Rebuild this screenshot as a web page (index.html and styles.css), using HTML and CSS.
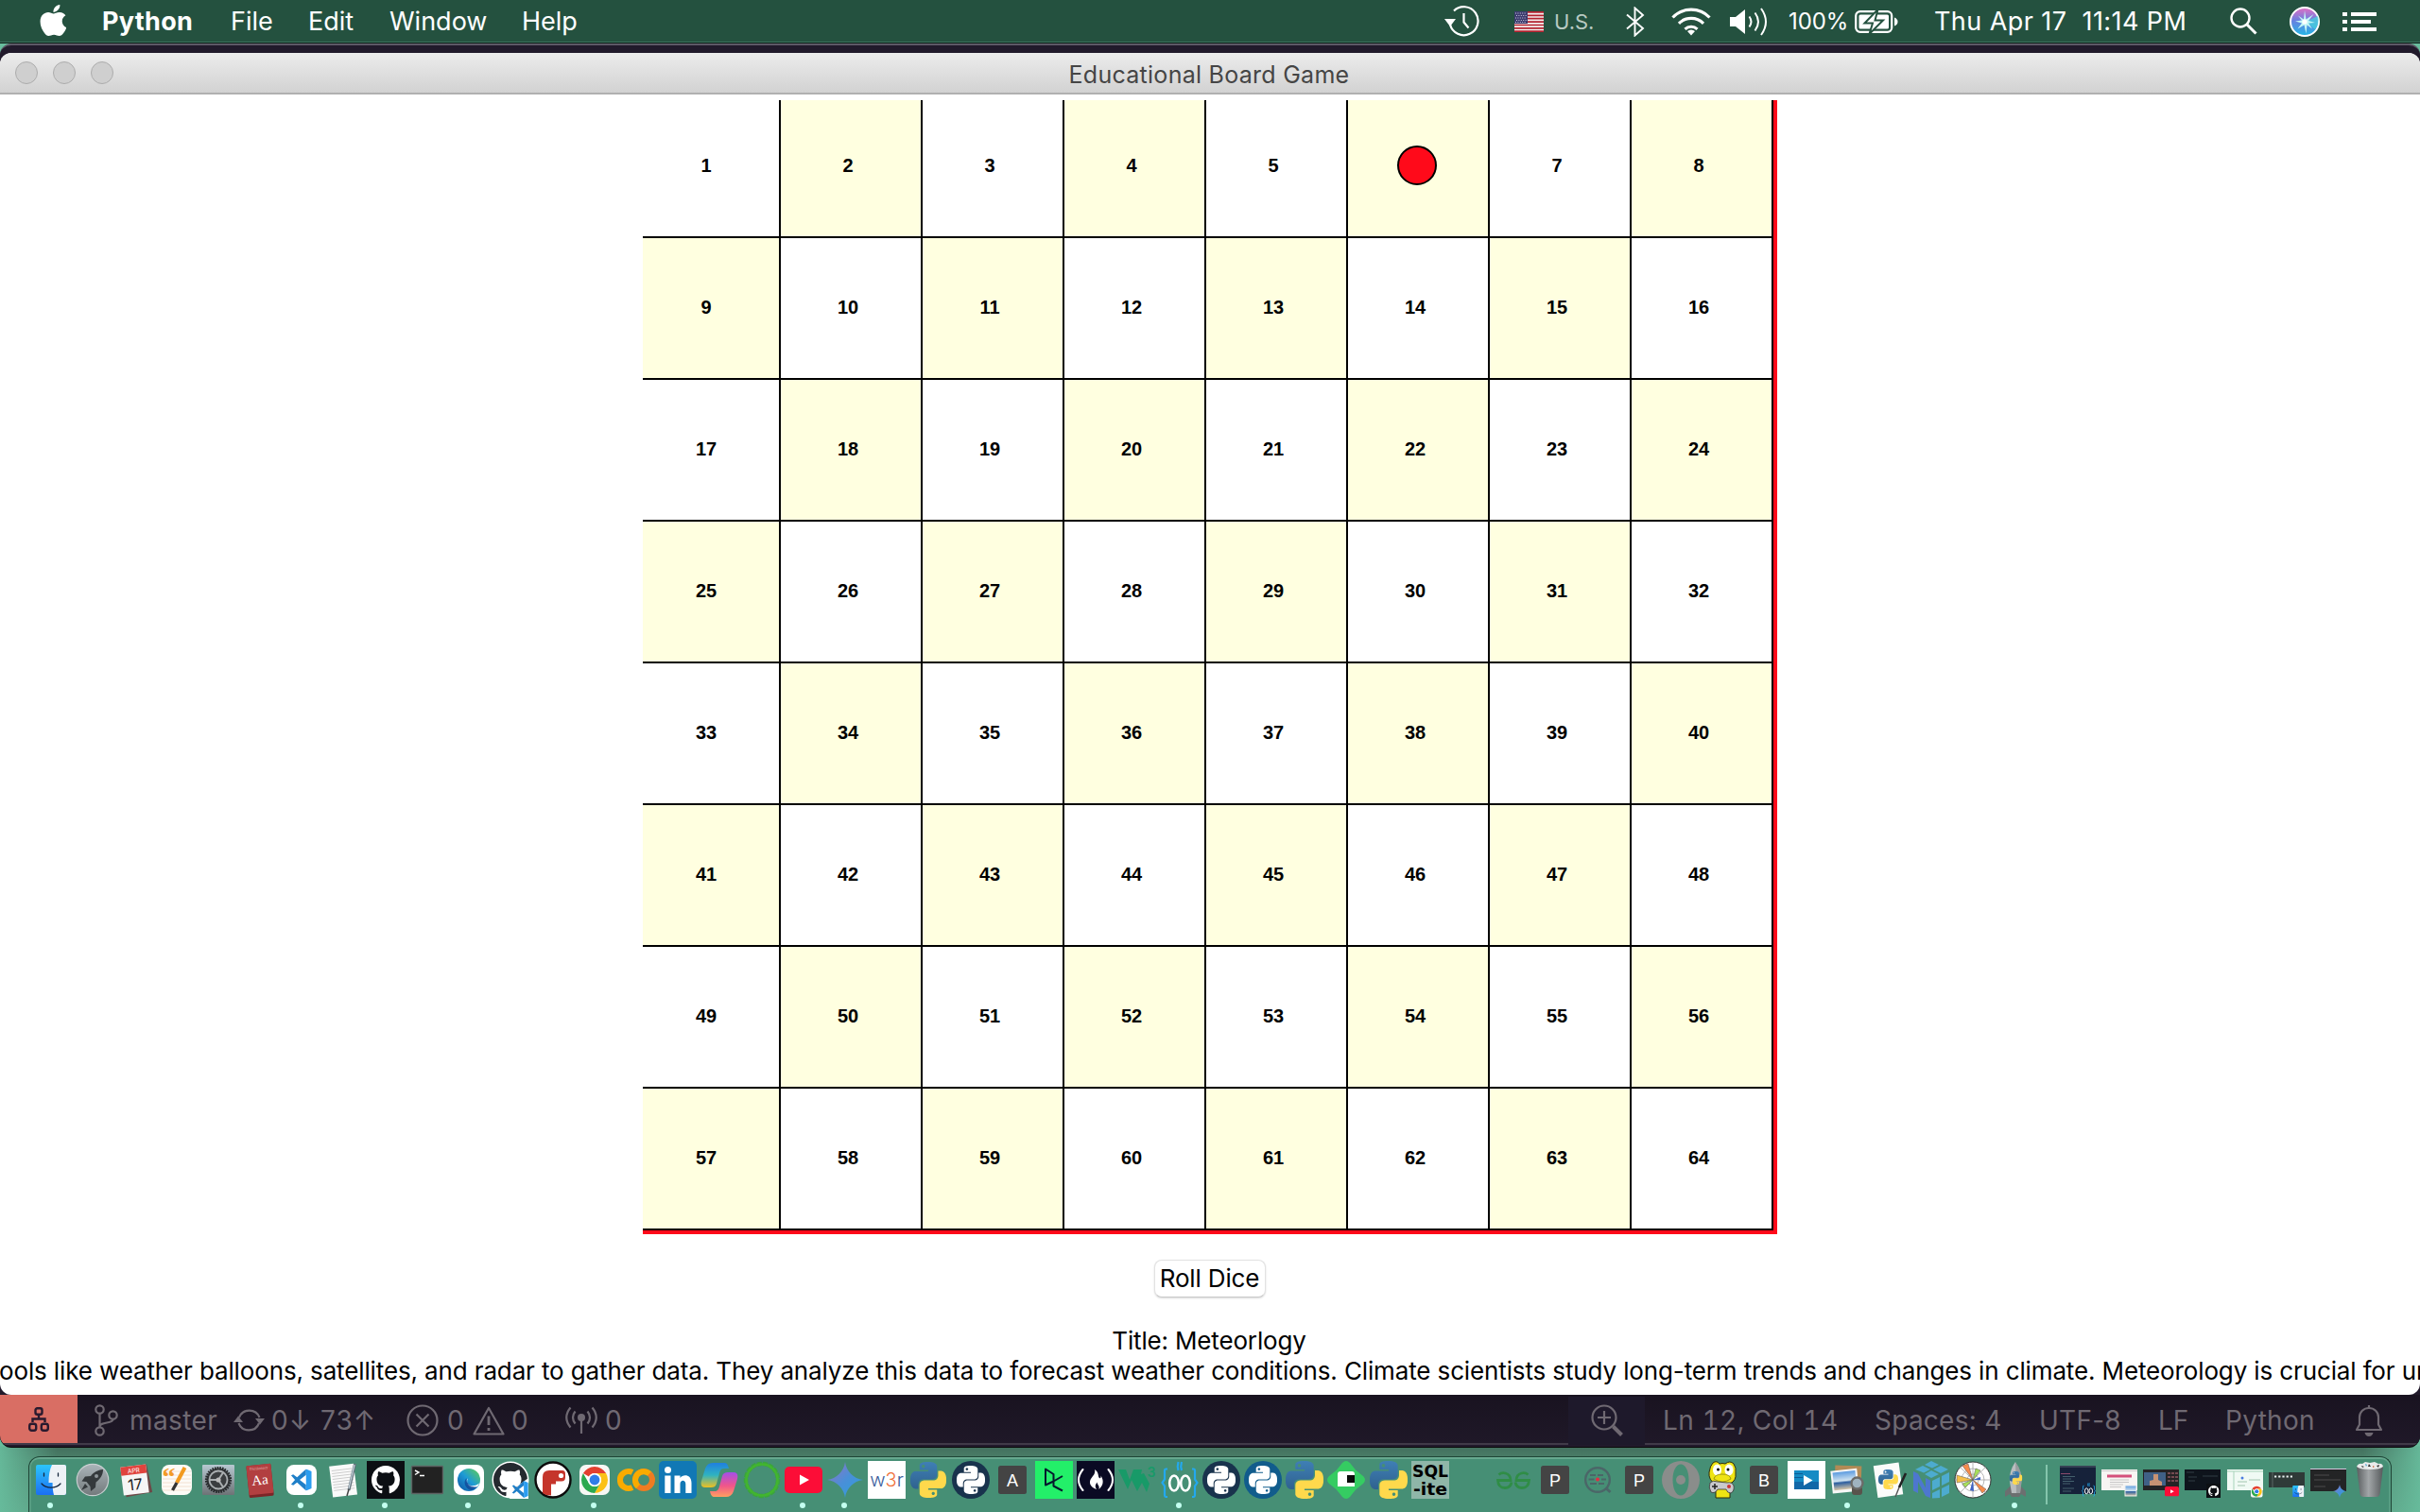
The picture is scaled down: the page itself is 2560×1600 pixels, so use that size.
FILE: index.html
```html
<!DOCTYPE html>
<html lang="en">
<head>
<meta charset="utf-8">
<title>Educational Board Game</title>
<link rel="stylesheet" href="styles.css">
</head>
<body>
<svg class="defs" aria-hidden="true">
  <defs>
    <linearGradient id="gFinder" x1="0" y1="0" x2="0" y2="1"><stop offset="0" stop-color="#2cc5fb"/><stop offset="1" stop-color="#1b6ff2"/></linearGradient>
    <linearGradient id="gSilver" x1="0" y1="0" x2="0" y2="1"><stop offset="0" stop-color="#aab4b9"/><stop offset="1" stop-color="#737a7c"/></linearGradient>
    <linearGradient id="gPrefs" x1="0" y1="0" x2="0" y2="1"><stop offset="0" stop-color="#b7c8d1"/><stop offset="1" stop-color="#6d7376"/></linearGradient>
    <linearGradient id="gEdge" x1="0" y1="1" x2="1" y2="0"><stop offset="0" stop-color="#0d4fa0"/><stop offset=".5" stop-color="#1d9bd6"/><stop offset="1" stop-color="#63d04e"/></linearGradient>
    <linearGradient id="gGemini" x1="0" y1="0" x2="1" y2="1"><stop offset="0" stop-color="#9a6fc0"/><stop offset=".5" stop-color="#4a8fd8"/><stop offset="1" stop-color="#2aa0dc"/></linearGradient>
    <linearGradient id="gCopA" x1="0" y1="0" x2="0" y2="1"><stop offset="0" stop-color="#1f7fe0"/><stop offset=".5" stop-color="#2fb3c0"/><stop offset="1" stop-color="#f0c020"/></linearGradient>
    <linearGradient id="gCopB" x1="0" y1="0" x2="0" y2="1"><stop offset="0" stop-color="#a44ee8"/><stop offset=".55" stop-color="#f0568a"/><stop offset="1" stop-color="#ffa060"/></linearGradient>
    <linearGradient id="gBlue" x1="0" y1="0" x2="0" y2="1"><stop offset="0" stop-color="#3f7fb5"/><stop offset="1" stop-color="#2f628f"/></linearGradient>
    <linearGradient id="gTrash" x1="0" y1="0" x2="1" y2="0"><stop offset="0" stop-color="#595d5f"/><stop offset=".45" stop-color="#a2a6a8"/><stop offset="1" stop-color="#55595b"/></linearGradient>
    <linearGradient id="gSiri" x1="0" y1="0" x2="0" y2="1"><stop offset="0" stop-color="#e36fc4"/><stop offset=".45" stop-color="#6a7fe0"/><stop offset="1" stop-color="#22b8e6"/></linearGradient>
    <linearGradient id="gSea" x1="0" y1="0" x2="0" y2="1"><stop offset="0" stop-color="#5b9be0"/><stop offset=".5" stop-color="#cfe2ef"/><stop offset=".6" stop-color="#2d5fa0"/><stop offset="1" stop-color="#d9c8a8"/></linearGradient>
  </defs>
  <symbol id="pyHalf" viewBox="0 0 24 24"><path d="M14.25.18l.9.2.73.26.59.3.45.32.34.34.25.34.16.33.1.3.04.26.02.2-.01.13V8.5l-.05.63-.13.55-.21.46-.26.38-.3.31-.33.25-.35.19-.35.14-.33.1-.3.07-.26.04-.21.02H8.77l-.69.05-.59.14-.5.22-.41.27-.33.32-.27.35-.2.36-.15.37-.1.35-.07.32-.04.27-.02.21v3.06H3.17l-.21-.03-.28-.07-.32-.12-.35-.18-.36-.26-.36-.36-.35-.46-.32-.59-.28-.73-.21-.88-.14-1.05-.05-1.23.06-1.22.16-1.04.24-.87.32-.71.36-.57.4-.44.42-.33.42-.24.4-.16.36-.1.32-.05.24-.01h.16l.06.01h8.16v-.83H6.18l-.01-2.75-.02-.37.05-.34.11-.31.17-.28.25-.26.31-.23.38-.2.44-.18.51-.15.58-.12.64-.1.71-.06.77-.04.84-.02 1.27.05zm-6.3 1.98l-.23.33-.08.41.08.41.23.34.33.22.41.09.41-.09.33-.22.23-.34.08-.41-.08-.41-.23-.33-.33-.22-.41-.09-.41.09z"/></symbol>
  <symbol id="python" viewBox="0 0 24 24"><use href="#pyHalf" width="24" height="24" fill="url(#gBlue)"/><g transform="rotate(180 12 12)"><use href="#pyHalf" width="24" height="24" fill="#ffd94c"/></g></symbol>
  <symbol id="pyMono" viewBox="0 0 24 24"><use href="#pyHalf" width="24" height="24"/><g transform="rotate(180 12 12)"><use href="#pyHalf" width="24" height="24"/></g></symbol>
  <symbol id="octocat" viewBox="0 0 16 16"><path d="M8 0C3.58 0 0 3.58 0 8c0 3.54 2.29 6.53 5.47 7.59.4.07.55-.17.55-.38 0-.19-.01-.82-.01-1.49-2.01.37-2.53-.49-2.69-.94-.09-.23-.48-.94-.82-1.13-.28-.15-.68-.52-.01-.53.63-.01 1.08.58 1.23.82.72 1.21 1.87.87 2.33.66.07-.52.28-.87.51-1.07-1.78-.2-3.64-.89-3.64-3.95 0-.87.31-1.59.82-2.15-.08-.2-.36-1.02.08-2.12 0 0 .67-.21 2.2.82.64-.18 1.32-.27 2-.27.68 0 1.36.09 2 .27 1.53-1.04 2.2-.82 2.2-.82.44 1.1.16 1.92.08 2.12.51.56.82 1.27.82 2.15 0 3.07-1.87 3.75-3.65 3.95.29.25.54.73.54 1.48 0 1.07-.01 1.93-.01 2.2 0 .21.15.46.55.38A8.013 8.013 0 0 0 16 8c0-4.42-3.58-8-8-8z"/></symbol>
  <symbol id="code" viewBox="0 0 24 24"><path fill="#1f7fc8" d="M17.500 0 7.600 9.200 3.300 6 1 7.100 5.300 12 1 16.900l2.300 1.100 4.300-3.200L17.500 24V17.400L10.500 12l7-5.400z"/><path fill="#2a9df0" d="M17.500 0 23.500 2.700v18.600L17.500 24z"/></symbol>
  <symbol id="chrome" viewBox="-16 -16 32 32"><circle r="14" fill="#fff"/><path fill="#e3402f" d="M-12.100-7A14 14 0 0 1 12.100-7H0A7 7 0 0 0-6.100-3.500z"/><path fill="#fbc116" d="M12.100-7A14 14 0 0 1 0 14L6.100 3.500A7 7 0 0 0 0-7z"/><path fill="#2da94f" d="M0 14A14 14 0 0 1-12.100-7L-6.100 3.500A7 7 0 0 0 6.100 3.500z"/><circle r="7" fill="#fff"/><circle r="5.400" fill="#2f7de9"/></symbol>
  <symbol id="finder" viewBox="0 0 32 32"><path fill="url(#gFinder)" d="M0 2a2 2 0 0 1 2-2h28a2 2 0 0 1 2 2v28a2 2 0 0 1-2 2H2a2 2 0 0 1-2-2z"/><path fill="#edf1f6" d="M17 0h13a2 2 0 0 1 2 2v28a2 2 0 0 1-2 2H19c-1-4-1.500-8-1.400-13H13.500C13.500 11 14.500 5 17 0z"/><path fill="none" stroke="#16263c" stroke-width="1.300" stroke-linecap="round" d="M8.500 9v3M23.500 9v3M6 20c5 5.500 15 5.500 20 0"/></symbol>
  <symbol id="youtube" viewBox="0 0 40 28"><rect width="40" height="28" rx="5" fill="#fc0d37"/><path fill="#fff" d="M16 8.500v11l10-5.500z"/></symbol>
  <symbol id="spark" viewBox="0 0 36 36"><path fill="url(#gGemini)" d="M18 0c1.200 9.500 8.500 16.800 18 18-9.500 1.200-16.800 8.500-18 18C16.800 26.500 9.500 19.200 0 18 9.500 16.800 16.800 9.500 18 0z"/></symbol>
  <symbol id="robot" viewBox="0 0 40 40"><g fill="none" stroke="#23a8ee" stroke-width="2.200"><path d="M7 8.500H5.500Q4 8.500 4 10.500v9L1.500 23 4 26.500v9q0 2.500 1.500 2.500H7M33 8.500h1.500q1.500 0 1.500 2v9l2.500 3.500L36 26.500v9q0 2.500-1.500 2.500H33"/><path d="M18.500 10q-1.500-4 0-9M22 10q-1.500-4 0-9"/></g><g fill="none" stroke="#fff" stroke-width="2.600"><ellipse cx="14" cy="23.500" rx="4.800" ry="8"/><ellipse cx="26" cy="23.500" rx="4.800" ry="8"/></g></symbol>
  <symbol id="apple" viewBox="4 32 365 448"><path d="M318.700 268.700c-.2-36.700 16.400-64.400 50-84.800-18.800-26.900-47.200-41.700-84.700-44.600-35.500-2.800-74.300 20.700-88.500 20.700-15 0-49.400-19.700-76.400-19.700C63.300 141.200 4 184.800 4 273.500q0 39.300 14.400 81.200c12.800 36.700 59 126.700 107.200 125.200 25.200-.6 43-17.900 75.800-17.900 31.800 0 48.300 17.900 76.400 17.900 48.600-.7 90.400-82.500 102.600-119.300-65.200-30.700-61.700-90-61.700-91.900zm-56.600-164.200c27.300-32.400 24.800-61.900 24-72.500-24.100 1.400-52 16.400-67.900 34.900-17.500 19.800-27.800 44.300-25.600 71.900 26.100 2 49.900-11.400 69.500-34.300z"/></symbol>
</svg>

<div class="desktop">
  <header class="menubar">
    <nav class="menus">
      <svg class="apple-logo" width="28" height="33"><use href="#apple" width="28" height="33" fill="#fff"/></svg>
      <span class="app-name">Python</span>
      <span>File</span>
      <span>Edit</span>
      <span>Window</span>
      <span>Help</span>
    </nav>
    <div class="extras">
      <svg width="38" height="34" viewBox="0 0 38 34" fill="none" stroke="#fff" stroke-width="2.200"><path d="M6 20A15 15 0 1 0 10 5.500"/><path d="M20.500 8v9.500l5 6"/><path fill="#fff" stroke="none" d="M0 14h12l-6 8z"/></svg>
      <svg width="31" height="22" viewBox="0 0 31 22"><rect width="31" height="22" fill="#f4f0f0"/><path stroke="#b3222f" stroke-width="1.700" d="M0 .9h31M0 4.300h31M0 7.700h31M0 11.100h31M0 14.500h31M0 17.900h31M0 21.200h31"/><rect width="14" height="13" fill="#3c3b6e"/><path stroke="#c9c9dd" stroke-width="1" stroke-dasharray="1 1.400" d="M1 2h12M2 4.500h11M1 7h12M2 9.500h11M1 11.500h12"/></svg>
      <span class="locale">U.S.</span>
      <svg width="20" height="32" viewBox="0 0 20 32" fill="none" stroke="#fff" stroke-width="1.900"><path d="M1 8.500 18 23l-8.500 7.500V1.500L18 9 1 23.500"/></svg>
      <svg width="42" height="31" viewBox="0 0 42 31" fill="none" stroke="#fff" stroke-width="3.200"><path d="M1.500 11.500a27 27 0 0 1 39 0M8 17.800a18.500 18.500 0 0 1 26 0M14.500 23.800a9.500 9.500 0 0 1 13 0"/><path fill="#fff" stroke="none" d="M21 30.500l-4-4.500a6 6 0 0 1 8 0z"/></svg>
      <svg width="42" height="32" viewBox="0 0 42 32" fill="none" stroke="#fff" stroke-width="2"><path fill="#fff" stroke="none" d="M0 11h6l10-8v26l-10-8H0z"/><path d="M20.500 10.500q4 5.500 0 11M26.500 6.500q7 9.500 0 19M33 2q10 14 0 28"/></svg>
      <span class="percent">100%</span>
      <svg width="46" height="24" viewBox="0 0 46 24"><rect x="1.200" y="1.200" width="38" height="21.600" rx="4.500" fill="none" stroke="#fff" stroke-width="2.200"/><rect x="4.500" y="4.500" width="31.500" height="15" rx="1.500" fill="#fff"/><path fill="#fff" stroke="#24513f" stroke-width="2" d="M24.500-1 10.500 13.500h8.500L15.500 25 30 10.500h-8.500z"/><path fill="#fff" d="M42 7.500q3.500 1.500 3.500 4.500T42 16.500z"/></svg>
      <span class="clock">Thu Apr 17&nbsp; 11:14 PM</span>
      <svg width="29" height="29" viewBox="0 0 29 29" fill="none" stroke="#fff"><circle cx="11" cy="11" r="9.500" stroke-width="2.400"/><path stroke-width="3" d="M18 18l9.500 9.500"/></svg>
      <svg width="32" height="32" viewBox="0 0 32 32"><circle cx="16" cy="16" r="15" fill="url(#gSiri)" stroke="#fff" stroke-width="2"/><path fill="#43d6dc" d="M17 16 30 10q2 8-3 14z" opacity=".7"/><path fill="#c4f7f6" d="M16 4l1.500 9.500 8-5.500-5.500 7 7 2-7 .5 4 6-5.500-4-1 9-2-9-7 4 4.500-6-7-2 7-1-4-5 6 4z"/><circle cx="16" cy="16" r="2.600" fill="#fff"/></svg>
      <svg width="36" height="20" viewBox="0 0 36 20" fill="#fff"><path d="M0 0h5v4H0zM9 0h27v4H9zM0 8h5v4H0zM9 8h21v4H9zM0 16h5v4H0zM9 16h27v4H9z"/></svg>
    </div>
  </header>

  <section class="editor">
    <main class="window">
      <div class="titlebar">
        <div class="lights"><em></em><em></em><em></em></div>
        <h1>Educational Board Game</h1>
      </div>
      <div class="content">
        <div class="board" id="board"></div>
        <button class="roll">Roll Dice</button>
        <p class="topic">Title: Meteorlogy</p>
        <p class="lesson">ools like weather balloons, satellites, and radar to gather data. They analyze this data to forecast weather conditions. Climate scientists study long-term trends and changes in climate. Meteorology is crucial for un</p>
      </div>
    </main>

    <footer class="statusbar">
      <div class="remote"><svg width="22" height="26" viewBox="0 0 22 26" fill="none" stroke="#2a1a2e" stroke-width="2.400"><rect x="7.500" y="1.200" width="7" height="6.500" rx="2"/><rect x="1.200" y="17.800" width="7" height="7" rx="2.200"/><rect x="13.800" y="17.800" width="7" height="7" rx="2.200"/><path d="M11 8v4M4.500 16v-3.500h13V16"/></svg></div>
      <div class="status-left">
        <svg width="25" height="34" viewBox="0 0 25 34" fill="none" stroke="#6f6972" stroke-width="2.200"><circle cx="5.500" cy="5.500" r="4.200"/><circle cx="5.500" cy="28.500" r="4.200"/><circle cx="19.500" cy="11.500" r="4.200"/><path d="M5.500 10v14M19.500 16c0 5-14 2-14 8"/></svg>
        <span>master</span>
        <svg width="33" height="26" viewBox="0 0 33 26" fill="none" stroke="#6f6972" stroke-width="2.200"><path d="M6 10A11.500 11.500 0 0 1 27.500 10M27 16A11.500 11.500 0 0 1 5.500 16"/><path fill="#6f6972" stroke="none" d="M23 11h10l-5 6.500zM0 15h10L5 8.500z"/></svg>
        <span class="sync">0↓ 73↑</span>
        <svg width="34" height="34" viewBox="0 0 34 34" fill="none" stroke="#6f6972" stroke-width="2.200"><circle cx="17" cy="17" r="15.500"/><path d="M10.500 10.500l13 13M23.500 10.500l-13 13"/></svg>
        <span>0</span>
        <svg width="34" height="31" viewBox="0 0 34 31" fill="none" stroke="#6f6972" stroke-width="2.200" stroke-linejoin="round"><path d="M17 2 32.500 29.500h-31z"/><path stroke-width="2.800" d="M17 10.500v9.500M17 23v3"/></svg>
        <span>0</span>
        <svg width="34" height="30" viewBox="0 0 34 30" fill="none" stroke="#6f6972" stroke-width="2.200"><circle cx="17" cy="12" r="4" fill="#6f6972" stroke="none"/><path d="M17 14v15M10.500 5.500q-5 6.500 0 13M23.500 5.500q5 6.500 0 13M5.500 1.500q-8.500 10.500 0 21M28.500 1.500q8.500 10.500 0 21"/></svg>
        <span>0</span>
      </div>
      <div class="status-right">
        <div class="zoom-item"><svg width="34" height="34" viewBox="0 0 34 34" fill="none" stroke="#6f6972" stroke-width="2.200"><circle cx="14" cy="14" r="12.500"/><path d="M14 7v14M7 14h14"/><path stroke-width="4" d="M23.500 23.500l9 9"/></svg></div>
        <span class="cursor">Ln 12, Col 14</span>
        <span>Spaces: 4</span>
        <span>UTF-8</span>
        <span>LF</span>
        <span class="lang">Python</span>
        <svg width="30" height="33" viewBox="0 0 30 33" fill="none" stroke="#6f6972" stroke-width="2.200"><path stroke-linejoin="round" d="M2 26h26l-3-5.500v-8a10 9.500 0 0 0-20 0v8z"/><path d="M15 0v3"/><path fill="#6f6972" stroke="none" d="M10.500 29h9q-1 4-4.500 4t-4.500-4z"/></svg>
      </div>
    </footer>
  </section>

  <nav class="dock">
    <div class="slot run"><svg viewBox="0 0 40 40"><use href="#finder" x="4" y="4" width="32" height="32"/></svg></div>
    <div class="slot"><svg viewBox="0 0 40 40"><circle cx="20" cy="20" r="16.700" fill="url(#gSilver)" stroke="#c8ced0" stroke-width="1.200"/><path fill="#34393c" d="M31 9c-6 .5-10 3-13 7l-6 .500-3.500 5 5 .500 4 5 .500 5 5-4 .5-5.500C28 19 31 15 31 9zM12 24l-4 7 7-3.500z"/><circle cx="24" cy="16" r="2" fill="#8d9599"/></svg></div>
    <div class="slot"><svg viewBox="0 0 40 40"><g transform="rotate(-7 20 20)"><path fill="#6d4a48" d="M6 6l28-1 2.500 30-28 2z"/><rect x="6" y="5" width="27" height="30" fill="#f6f6f6"/><rect x="6" y="5" width="27" height="9" fill="#e0443e"/><text x="19.500" y="12.300" class="tiny cal" fill="#fff">APR</text><text x="19.500" y="30.500" class="calday" fill="#222">17</text></g></svg></div>
    <div class="slot"><svg viewBox="0 0 40 40"><rect x="4" y="4" width="32" height="32" rx="8" fill="#fdfbf7"/><path stroke="#f0dcc8" stroke-width=".8" d="M5 11h30M5 15h30M5 19h30M5 23h30M5 27h30M5 31h30"/><text x="11.500" y="26" class="quote" fill="#f29a26">“</text><path stroke="#f29a1f" stroke-width="4" d="M28.500 7 20 23"/><path stroke="#333" stroke-width="3.400" d="M20 23l-4.500 8"/></svg></div>
    <div class="slot"><svg viewBox="0 0 40 40"><rect x="3" y="4" width="34" height="32" rx="1" fill="url(#gPrefs)"/><circle cx="20" cy="20" r="12.500" fill="#3a3d3f" stroke="#26292b" stroke-width="3.200" stroke-dasharray="1.600 1"/><circle cx="20" cy="20" r="9.500" fill="none" stroke="#a9aeb0" stroke-width="1.800"/><path stroke="#a9aeb0" stroke-width="2" d="M20 20h-10M20 20l5.500-8.500M20 20l5.500 8.500"/><circle cx="20" cy="20" r="2.600" fill="#bbb"/></svg></div>
    <div class="slot"><svg viewBox="0 0 40 40"><g transform="rotate(-6 20 20)"><rect x="7" y="4" width="26" height="34" rx="1.500" fill="#7d2527"/><rect x="7" y="4" width="26" height="31" rx="1" fill="#b23f40"/><text x="20" y="9" class="micro" fill="#e7b9b5">Dictionary</text><text x="20" y="25" class="serif" fill="#fff">Aa</text></g></svg></div>
    <div class="slot run"><svg viewBox="0 0 40 40"><rect x="4" y="4" width="32" height="32" rx="8" fill="#fff"/><use href="#code" x="8" y="8.500" width="23" height="23"/></svg></div>
    <div class="slot"><svg viewBox="0 0 40 40"><g transform="rotate(-7 20 20)"><rect x="6" y="4" width="26" height="33" fill="#fafafa"/><path stroke="#c3c3c3" stroke-width=".8" d="M8 9h22M8 12h22M8 15h22M8 18h22M8 21h22M8 24h22M8 27h22M8 30h22"/></g><path stroke="#65737d" stroke-width="3" d="M31.500 3 25 31"/><path stroke="#c5d2da" stroke-width="1.200" d="M31 4 25 29"/><path stroke="#444" stroke-width="1.500" d="M25 30l-2 7"/></svg></div>
    <div class="slot run"><svg viewBox="0 0 40 40"><rect width="40" height="40" fill="#0c0f13"/><use href="#octocat" x="5" y="5" width="30" height="30" fill="#fff"/></svg></div>
    <div class="slot"><svg viewBox="0 0 40 40"><rect x="3.500" y="5.500" width="33" height="29" rx="1" fill="#222" stroke="#5d6363" stroke-width="1.400"/><path fill="none" stroke="#fff" stroke-width="1.400" d="M7 10l4 2-4 2.500M12 15.500h5"/></svg></div>
    <div class="slot run"><svg viewBox="0 0 40 40"><rect x="4" y="4" width="32" height="32" rx="8" fill="#fff"/><circle cx="20" cy="20" r="12" fill="url(#gEdge)"/><path fill="#fff" d="M19 18.500c-2.500 1.500-1.500 6.500 3 7.500 3.500.8 7-.5 9-2.500-1 3-2.500 4-3 4.500-7 1.500-12-4-9-9.500z"/><path fill="#103f91" d="M17.500 18c-4 4-1.500 11 4.500 13 3 0 6-2.500 7-4-7 1.500-12-3-11.500-9z" opacity=".7"/></svg></div>
    <div class="slot"><svg viewBox="0 0 40 40"><circle cx="20" cy="20" r="19.500" fill="#fff"/><use href="#octocat" x="2" y="2" width="36" height="36" fill="#24292f"/><path fill="#fff" d="M39 18v22H19l3-8 6-6z"/><use href="#code" x="21" y="21" width="18" height="18"/></svg></div>
    <div class="slot"><svg viewBox="0 0 40 40"><circle cx="20" cy="20" r="18.500" fill="#fff" stroke="#0b0b0b" stroke-width="2.400"/><path fill="#c5352b" d="M9 34V17q0-7 7-7h14q3 0 3 3.500v4q0 4-4 4h-6v3h-5v12q-6 0-9-2.500z"/><circle cx="28.500" cy="15.500" r="2.600" fill="#fff"/></svg></div>
    <div class="slot run"><svg viewBox="0 0 40 40"><rect x="4" y="4" width="32" height="32" rx="7" fill="#f7f7f4"/><use href="#chrome" x="4" y="4" width="32" height="32"/></svg></div>
    <div class="slot"><svg viewBox="0 0 40 40" fill="none" stroke-width="6"><path stroke="#f9ab00" d="M16 12a9 9 0 1 0 0 16"/><circle cx="28" cy="20" r="9" stroke="#ee7c22"/><path stroke="#f9ab00" d="M22 27a9 9 0 0 1 12-13.500"/></svg></div>
    <div class="slot"><svg viewBox="0 0 40 40"><rect width="40" height="40" rx="5" fill="#1178b5"/><circle cx="9.500" cy="9.500" r="3.500" fill="#fff"/><path fill="#fff" d="M6.300 15.500h6.200v18.500H6.300zM16.500 15.500h6V18c3-4.500 12-4 12 5v11h-6.200v-9.500c0-5-5.800-5-5.800 0V34h-6z"/></svg></div>
    <div class="slot"><svg viewBox="0 0 40 40"><path fill="url(#gCopA)" d="M13 2h12c3 0 4 2 5 6h-5c-3 0-4 1.500-5 5l-3 11c-1 3-3 4-6 4H5c-4 0-5-3-4-7l4-13c1.500-4 4-6 8-6z"/><path fill="url(#gCopB)" d="M27 38H15c-3 0-4-2-5-6h5c3 0 4-1.500 5-5l3-11c1-3 3-4 6-4h6c4 0 5 3 4 7l-4 13c-1.500 4-4 6-8 6z"/></svg></div>
    <div class="slot"><svg viewBox="0 0 40 40" fill="none"><circle cx="20" cy="20" r="17" stroke="#3aa53c" stroke-width="4.500" stroke-dasharray="5 1.200"/><circle cx="20" cy="20" r="16.500" stroke="#42b52f" stroke-width="2.600"/></svg></div>
    <div class="slot run"><svg viewBox="0 0 40 40"><use href="#youtube" x="0" y="6" width="40" height="28"/></svg></div>
    <div class="slot run"><svg viewBox="0 0 40 40"><use href="#spark" x="1" y="1" width="38" height="38"/></svg></div>
    <div class="slot"><svg viewBox="0 0 40 40"><rect width="40" height="40" fill="#fff"/><text x="20" y="27" class="w3r" fill="#3b5e9c">w<tspan fill="#f0703a">3</tspan>r</text></svg></div>
    <div class="slot"><svg viewBox="0 0 40 40"><use href="#python" x="1" y="1" width="38" height="38"/></svg></div>
    <div class="slot"><svg viewBox="0 0 40 40"><circle cx="20" cy="20" r="20" fill="#19334d"/><use href="#pyMono" x="5" y="5" width="30" height="30" fill="#fff"/></svg></div>
    <div class="slot"><svg viewBox="0 0 40 40"><rect x="5" y="5" width="30" height="30" rx="2.500" fill="#444"/><text x="20" y="26.500" class="letter" fill="#fff">A</text></svg></div>
    <div class="slot"><svg viewBox="0 0 40 40"><rect width="40" height="40" fill="#23ef69"/><path fill="none" stroke="#05192d" stroke-width="2" stroke-linejoin="round" d="M29 16 19.500 21.500V14L11 8.500v17l8.500-4v5L29 31.500"/></svg></div>
    <div class="slot"><svg viewBox="0 0 40 40"><rect width="40" height="40" fill="#0a0a23"/><path fill="none" stroke="#fff" stroke-width="2" stroke-linecap="round" d="M6.500 9q-9 11 0 22M33.500 9q9 11 0 22"/><path fill="#fff" d="M19 9c5 3 3 7 5 9 1 1 2-.5 1.500-2.500 4 6 2 11-2 14.500 1-4-1.500-4.500-2-7.500-1 2-3 3.500-.5 7.500-7-2-9-8-5-12.500 2-2.500 4-5 3-8.500z"/></svg></div>
    <div class="slot"><svg viewBox="0 0 40 40"><path fill="#189a68" d="M0 9h8l4 11 4-11h9l-1 5 3-1 6 11-3 9-5-10-5 9-6-12-4 10z"/><text x="35" y="17" class="cube" fill="#189a68">3</text></svg></div>
    <div class="slot run"><svg viewBox="0 0 40 40"><use href="#robot" width="40" height="40"/></svg></div>
    <div class="slot"><svg viewBox="0 0 40 40"><circle cx="20" cy="20" r="20" fill="#19334d"/><use href="#pyMono" x="5" y="5" width="30" height="30" fill="#fff"/></svg></div>
    <div class="slot"><svg viewBox="0 0 40 40"><circle cx="20" cy="20" r="20" fill="#115c8c"/><use href="#pyMono" x="5" y="5" width="30" height="30" fill="#fff"/></svg></div>
    <div class="slot"><svg viewBox="0 0 40 40"><use href="#python" width="40" height="40"/></svg></div>
    <div class="slot"><svg viewBox="0 0 40 40"><path fill="#35cc62" d="M16 2q4-4 8 0l4 5q2 3 5 5l5 4q4 4 0 8l-5 4q-3 2-5 5l-4 5q-4 4-8 0l-4-5q-2-3-5-5l-5-4q-4-4 0-8l5-4q3-2 5-5z"/><path fill="#fff" d="M11 14q0-3 3-3h12q3 0 3 3v13H11z"/><rect x="21" y="15" width="8" height="8" fill="#0a0a0a"/></svg></div>
    <div class="slot"><svg viewBox="0 0 40 40"><use href="#python" width="40" height="40"/></svg></div>
    <div class="slot"><svg viewBox="0 0 40 40"><rect width="40" height="40" fill="#8fb6a8"/><text x="20" y="17" class="sql" textLength="38" lengthAdjust="spacingAndGlyphs">SQL</text><text x="20" y="36" class="sql" textLength="36" lengthAdjust="spacingAndGlyphs">-ite</text></svg></div>
    <div class="slot"></div>
    <div class="slot"><svg viewBox="0 0 40 40" fill="none" stroke="#2f8d46" stroke-width="2.800"><path d="M4.500 14.500q3-2.500 7-1.500 5.500 1.500 5.500 7.500H3.500q.5 8 7.500 8 6 0 7-6M35.500 14.500q-3-2.500-7-1.500-5.500 1.500-5.500 7.500h13.500q-.5 8-7.500 8-6 0-7-6"/></svg></div>
    <div class="slot"><svg viewBox="0 0 40 40"><rect x="5" y="5" width="30" height="30" rx="2.500" fill="#444"/><text x="20" y="26.500" class="letter" fill="#fff">P</text></svg></div>
    <div class="slot"><svg viewBox="0 0 40 40" fill="none" stroke="#4b6668"><circle cx="20" cy="20" r="12.800" stroke-width="2.400"/><path stroke-width="3" d="M29 29l4.500 4"/><path stroke-width="2.200" d="M12 15h6M20 15h6M10.500 19.500h6M24 19.500h5M12 24h7M21 24h6"/><circle cx="20" cy="19.500" r="2" fill="#e22c44" stroke="none"/></svg></div>
    <div class="slot"><svg viewBox="0 0 40 40"><rect x="5" y="5" width="30" height="30" rx="2.500" fill="#444"/><text x="20" y="26.500" class="letter" fill="#fff">P</text></svg></div>
    <div class="slot"><svg viewBox="0 0 40 40"><path fill="#8a8d8b" fill-rule="evenodd" d="M20 0a20 20 0 0 1 0 40 20 20 0 0 1 0-40zm0 3.500c-5 0-8.500 7-8.500 16.500S15 36.500 20 36.500 28.500 29.500 28.500 20 25 3.500 20 3.500z"/><circle cx="20" cy="20" r="5" fill="#8a8d8b"/></svg></div>
    <div class="slot"><svg viewBox="0 0 40 40"><path fill="#efe414" stroke="#2b2a10" stroke-width="1" d="M10 2q4-3 7 1 3-1 6 0 5-4 9 0 3 4 2 10 1 8-6 11v15H13V25Q5 20 6 12q1-7 4-10z"/><ellipse cx="14.500" cy="9.500" rx="4.500" ry="6" fill="#fff"/><ellipse cx="27" cy="9.500" rx="4.500" ry="6" fill="#fff"/><circle cx="15.500" cy="9" r="1.500"/><circle cx="26" cy="9" r="1.500"/><path fill="#efe414" stroke="#8a8410" stroke-width=".8" d="M11 19q1-5 9-5t9 5q-9 6-18 0z"/><path fill="#c9c9cc" stroke="#333" stroke-width=".8" d="M7 23q3-3 8-1l10 1q5-1 7 3 1 6-3 8-4 0-5-4h-9q-3 5-7 3-3-5-1-10z"/><path stroke="#222" stroke-width="1.500" d="M9 27h6M12 24v6"/><circle cx="27" cy="27" r="2" fill="#c33"/></svg></div>
    <div class="slot"><svg viewBox="0 0 40 40"><rect x="5" y="5" width="30" height="30" rx="2.500" fill="#444"/><text x="20" y="26.500" class="letter" fill="#fff">B</text></svg></div>
    <div class="slot"><svg viewBox="0 0 40 40"><rect width="40" height="40" fill="#fff"/><rect x="7" y="10" width="26" height="20" fill="#158bc4"/><path fill="#1268a8" d="M7 22h26v8H7z"/><path stroke="#0c5c96" d="M7 13.500h9M7 17.500h9"/><path fill="#fff" d="M17 15v11l9.500-5.500z"/></svg></div>
    <div class="slot run"><svg viewBox="0 0 40 40"><rect x="6" y="5" width="28" height="22" fill="#b28a55" transform="rotate(2 20 16)"/><g transform="rotate(-6 18 21)"><rect x="2.500" y="9" width="28" height="24" fill="#f6f6f6"/><rect x="4.500" y="11" width="24" height="19" fill="url(#gSea)"/></g><rect x="24" y="26" width="11" height="10" rx="3" fill="#59534c"/><circle cx="29.500" cy="23.500" r="6" fill="#9fb3bf" stroke="#6b6b68" stroke-width="2.400"/></svg></div>
    <div class="slot"><svg viewBox="0 0 40 40"><g transform="rotate(-8 20 20)"><rect x="5" y="3" width="27" height="34" fill="#fbfbfa"/></g><use href="#python" x="8" y="9" width="21" height="21"/><path stroke="#222" stroke-width="2.600" d="M37 13 30 28"/><path stroke="#555" stroke-width="1.400" d="M30 28l-4 10"/></svg></div>
    <div class="slot"><svg viewBox="0 0 40 40"><path fill="#4dabcf" d="M20 0l8 4-7 3.500L13 4zM11 5l8 4-7 3.500L3 9zM30 5l8 4-8 4-8-4zM20 10l8 4-8 4-7-4zM39 12v10l-8 4V16zM29 17v10l-8 4V21zM39 25v9l-8 4v-9zM29 30v9l-8 .500V34z"/><path fill="#4d77cf" d="M1 11l5 2.500 8 15V18l5 2.500V39l-5-2L6 22v12l-5-2.500z"/></svg></div>
    <div class="slot"><svg viewBox="0 0 40 40"><circle cx="20" cy="20" r="19" fill="#fff" stroke="#333" stroke-width="1"/><g fill="none" stroke="#999" stroke-width=".7"><circle cx="20" cy="20" r="12"/><circle cx="20" cy="20" r="6"/><path d="M1 20h38M20 1v38M6.500 6.500l27 27M33.500 6.500l-27 27"/></g><path fill="#f68b4a" stroke="#555" stroke-width=".5" d="M20 20 9 5l6-2zM20 20l14 10-4 4z"/><path fill="#f6c04a" stroke="#555" stroke-width=".5" d="M20 20 3 23v-8z"/><path fill="#a8e05a" stroke="#555" stroke-width=".5" d="M20 20l3-12 5 2zM20 20l-8 8-3-4z"/><path fill="#3e63c4" d="M20 20h8v-3zM20 20l1 12-4-1z"/></svg></div>
    <div class="slot run"><svg viewBox="0 0 40 40"><path fill="#6c6f70" d="M14 27l-5 5v6l5-3 2 3h8l2-3 5 3v-6l-5-5z"/><path fill="#b9bdbf" d="M20 1c5 7 7 14 6.500 21L25 34h-9l-2-12C13.500 15 15 8 20 1z"/><path fill="#6f7375" d="M20 1c5 7 7 14 6.500 21L25 34h-4z" opacity=".45"/><use href="#python" x="13.500" y="11" width="14" height="14"/></svg></div>
    <div class="divider"></div>
    <div class="slot"><svg viewBox="0 0 40 40"><rect x="1" y="5" width="38" height="30" fill="#16223a"/><path stroke="#56616f" d="M1 6h38"/><path stroke="#8a4a6c" d="M2 13.500h10"/><path stroke="#50707a" stroke-width=".8" d="M4 16.500h13M4 19h9M4 21.500h12M4 24h8M4 29h12M4 32h9"/><use href="#robot" x="24" y="23" width="15" height="15"/></svg></div>
    <div class="slot"><svg viewBox="0 0 40 40"><rect x="1" y="9" width="38" height="22" fill="#f7f5f3"/><path stroke="#ccc" d="M1 10.500h38"/><rect x="7" y="14.500" width="26" height="3" fill="#d4507c"/><path stroke="#bbb" stroke-width=".8" d="M10 20h20M10 22.500h20M10 25h14M10 27.500h12"/><rect x="26" y="26" width="12" height="11" fill="url(#gSea)" stroke="#eee"/></svg></div>
    <div class="slot"><svg viewBox="0 0 40 40"><rect x="1" y="9" width="38" height="22" fill="#242325"/><rect x="2" y="12" width="23" height="14" fill="#406086"/><path fill="#c79273" d="M8 26v-5l4-1v-6h5v6l4 2v4z"/><path stroke="#8f5860" stroke-width="1.600" stroke-dasharray="3 1" d="M27 13h11M27 17h11M27 21h11"/><use href="#youtube" x="24" y="27" width="15" height="10.500"/></svg></div>
    <div class="slot"><svg viewBox="0 0 40 40"><rect x="1" y="9" width="38" height="22" fill="#0e141c"/><path stroke="#3b4652" stroke-width=".8" d="M3 12h8M5 17h9M20 16h16M5 21h7"/><rect x="24" y="24" width="15" height="15" fill="#0c0f13"/><use href="#octocat" x="26" y="26" width="11.500" height="11.500" fill="#fff"/></svg></div>
    <div class="slot"><svg viewBox="0 0 40 40"><rect x="1" y="9" width="38" height="22" fill="#f0faf4"/><path stroke="#a7d3ba" d="M1 11h38M8 11v20"/><path stroke="#8fb8a0" stroke-width=".8" d="M12 22h10M24 20h12M12 26h8"/><circle cx="17" cy="18" r="1.500" fill="#4a7de0"/><rect x="26" y="26" width="12.500" height="12.500" rx="2" fill="#f7f7f4"/><use href="#chrome" x="26" y="26" width="12.500" height="12.500"/></svg></div>
    <div class="slot"><svg viewBox="0 0 40 40"><rect x="1" y="12" width="38" height="16" fill="#2f3a38"/><path stroke="#5a6664" d="M5 12v16" /><path stroke="#e8f0f0" stroke-width="2" stroke-dasharray="2.200 2" d="M7 16.500h20"/><use href="#finder" x="26" y="26" width="12.500" height="12"/></svg></div>
    <div class="slot"><svg viewBox="0 0 40 40"><rect x="1" y="8" width="38" height="24" fill="#232425"/><path stroke="#d8c8e0" d="M1 8.500h38"/><path stroke="#555" stroke-width=".8" d="M5 15h16M5 20h28M5 27h12"/><use href="#spark" x="25" y="25" width="14" height="14"/></svg></div>
    <div class="slot"><svg viewBox="0 0 40 40"><path fill="url(#gTrash)" d="M6 6h28l-3.500 29q-.5 3-4 3h-13q-3.500 0-4-3z"/><path fill="#e9ebeb" d="M6 6q2-4 6-3l3-2 5 1 5-1 4 2q4-1 5 3-3 3-14 3T6 6z"/><path fill="#333" d="M11 5l3 1-2 1zM19 3l2 3h-3zM27 5l3-1-1 3z"/><path fill="#4aa3d0" d="M15 3l2 1-1 2z"/><path fill="#d0633a" d="M23 5l2 1-2 1z"/></svg></div>
  </nav>
</div>
<script src="board.js"></script>
</body>
</html>
```
FILE: styles.css
```css
* { box-sizing: border-box; margin: 0; padding: 0; }
body { width: 2560px; height: 1600px; overflow: hidden; font-family: Inter, "Liberation Sans", sans-serif; }
em { font-style: normal; }
.defs { position: absolute; width: 0; height: 0; }
.desktop { display: flex; flex-direction: column; height: 1600px; background: linear-gradient(90deg, rgba(104,190,158,.9), transparent 60px, transparent 2500px, rgba(104,190,158,.9)), linear-gradient(#66b796 0 1530px, #43705e 1531px, #4b8069 1545px, #5a9b80); }

.menubar { display: flex; height: 46px; background: #24513f; border-bottom: 1px solid #0c1c16; box-shadow: inset 0 -1px #3d7560; color: #fff; font-size: 27px; line-height: 44px; white-space: nowrap; }
.menus { display: grid; grid-template-columns: 66px 136px 82px 86px 140px 80px; padding-left: 42px; width: 1528px; align-items: center; height: 44px; }
.menubar span { padding-top: 1px; }
.apple-logo { margin-top: -3px; }
.app-name { font-weight: 700; letter-spacing: .3px; }
.extras { display: grid; grid-template-columns: 74px 42px 76px 48px 62px 62px 70px 84px 313px 63px 56px 36px; align-items: center; height: 44px; }
.locale { font-size: 22px; color: #b8c9c2; }
.percent { font-size: 24px; letter-spacing: -.1px; }
.clock { letter-spacing: .43px; }

.editor { height: 1485px; border-radius: 12px; background: #211a2b; border-top: 2px solid #5d5866; padding-top: 8px; display: flex; flex-direction: column; box-shadow: 0 1px #0a0a0a; overflow: hidden; }
.window { height: 1420px; display: flex; flex-direction: column; border-radius: 12px; overflow: hidden; background: #fff; }
.titlebar { display: flex; height: 44px; background: linear-gradient(#ececec, #d2d2d2); border-bottom: 2px solid #b0b0b0; align-items: center; }
.lights { display: flex; gap: 16px; padding-left: 16px; }
.lights em { width: 24px; height: 24px; border-radius: 50%; background: #cfcfcf; border: 1px solid #acacac; }
.titlebar h1 { flex: 1; padding: 3px 122px 0 0; text-align: center; font-size: 25px; font-weight: 400; letter-spacing: .27px; color: #454545; }
.content { display: flex; flex-direction: column; align-items: center; padding-top: 6px; }
.board { display: grid; grid-template-columns: 146px repeat(7, 150px); grid-template-rows: 146px repeat(7, 150px); border-right: 4px solid #ff0a1a; border-bottom: 4px solid #ff0a1a; }
.cell { display: flex; align-items: center; justify-content: center; border-right: 2px solid #000; border-bottom: 2px solid #000; padding: 0 6px 2px 0; font: bold 20px/24px "Liberation Sans", Arial, sans-serif; color: #000; }
.cell.edge-left { padding-right: 10px; }
.cell.edge-top { padding-bottom: 6px; }
.cell.tint { background: #ffffe0; }
.token { width: 42px; height: 42px; margin-left: 4px; border-radius: 50%; border: 2px solid #000; background: #ff0a1a; }
.roll { margin-top: 27px; width: 118px; height: 40px; padding: 0 1px 0 0; border: 1px solid #e2e2e2; border-bottom-color: #c9c9c9; border-radius: 8px; background: #fff; box-shadow: 0 1px 2px rgba(0,0,0,.15); font: 26px/37px Inter, sans-serif; letter-spacing: -.15px; color: #000; white-space: nowrap; display: flex; justify-content: center; }
.topic, .lesson { font-size: 26px; line-height: 32px; color: #000; white-space: nowrap; }
.topic { margin-top: 30px; padding-right: 2px; letter-spacing: -.16px; }
.lesson { width: 2560px; letter-spacing: -.129px; text-indent: -1px; overflow: hidden; }

.statusbar { display: flex; height: 53px; color: #6f6972; font-size: 28px; line-height: 53px; white-space: nowrap; background: linear-gradient(#191320, #1f1828); border-bottom: 2px solid #403a48; }
.statusbar span { padding-top: 1px; }
.remote { width: 82px; background: #d96e64; display: flex; align-items: center; justify-content: center; }
.status-left { display: grid; grid-template-columns: 37px 110px 40px 143px 43px 27px 41px 57px 42px 40px; padding-left: 18px; align-items: center; width: 1577px; }
.status-left span { letter-spacing: .4px; }
.lang { letter-spacing: .3px; }
.status-left .sync { letter-spacing: 1.050px; }
.status-right { display: grid; grid-template-columns: 100px 224px 174px 126px 71px 137px 30px; align-items: center; }
.status-right span:nth-of-type(2), .status-right span:nth-of-type(3) { letter-spacing: .25px; }
.status-right .cursor { font-variant-numeric: tabular-nums; letter-spacing: .5px; }
.zoom-item { width: 81px; height: 51px; display: flex; align-items: center; justify-content: center; background: #1e192b; }

.dock { display: flex; height: 59px; width: 2500px; margin: 10px 0 0 30px; padding: 3px 0 0 1px; border: 1px solid #1f4536; border-bottom: 0; border-radius: 12px 12px 0 0; background: #468f75; box-shadow: inset 0 2px #67a88f, inset 2px 0 #579d83, inset -2px 0 #579d83; }
.slot { flex: none; width: 44.210px; height: 55px; display: flex; flex-direction: column; align-items: center; }
.slot svg { width: 40px; height: 40px; display: block; margin-top: 1px; }
.run::after { content: ""; width: 6px; height: 6px; border-radius: 50%; background: #c3fff0; margin: 4px 2px 0 0; }
.divider { flex: none; width: 2px; height: 42px; margin: 5px 10px 0 10px; background: #84c5ac; }
.dock text { text-anchor: middle; font-family: Inter, sans-serif; }
.dock .tiny { font-size: 6.500px; }
.dock .calday { font-size: 16px; }
.dock .micro { font: 4.500px "Liberation Serif", serif; }
.dock .serif { font: 15px "Liberation Serif", serif; }
.dock .quote { font: bold 28px "Liberation Serif", serif; }
.dock .w3r { font: 300 20px Inter, sans-serif; }
.dock .letter { font: 18px "Liberation Sans", sans-serif; }
.dock .cube { font-size: 14px; font-weight: 600; }
.dock .sql { font: bold 18px "DejaVu Sans", sans-serif; }
```
FILE: board.js
```js
const board = document.getElementById('board');
const player = 6;
for (let n = 1; n <= 64; n++) {
  const row = Math.floor((n - 1) / 8), col = (n - 1) % 8;
  const cell = document.createElement('div');
  cell.className = 'cell' + ((row + col) % 2 ? ' tint' : '') + (col ? '' : ' edge-left') + (row ? '' : ' edge-top');
  if (n === player) {
    const token = document.createElement('div');
    token.className = 'token';
    cell.append(token);
  } else {
    cell.textContent = n;
  }
  board.append(cell);
}
```
